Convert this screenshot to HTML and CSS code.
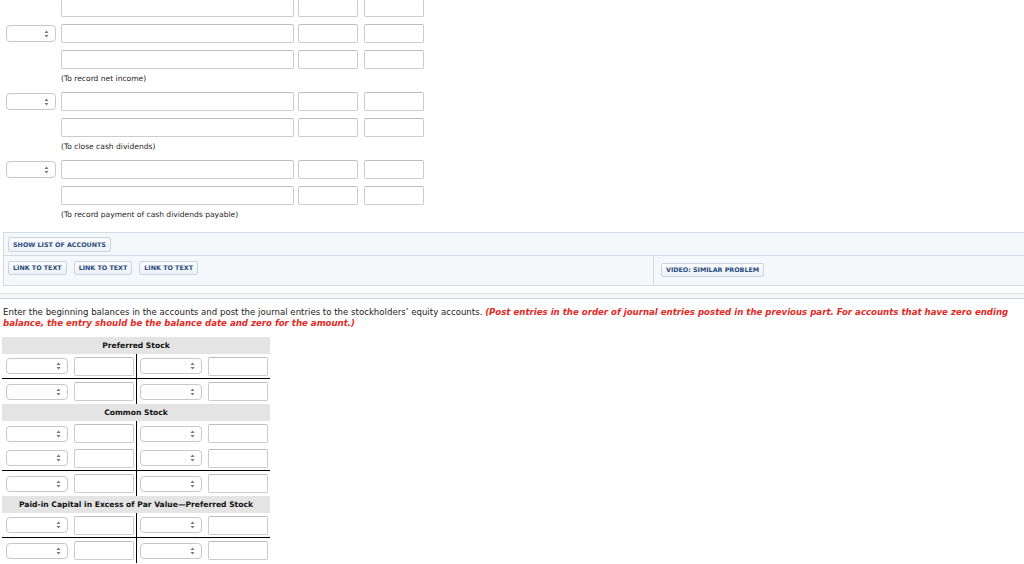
FILE: index.html
```html
<!DOCTYPE html>
<html lang="en">
<head>
  <meta charset="UTF-8" />
  <meta name="viewport" content="width=device-width, initial-scale=1.0"/>
  <title>Stockholders' Equity</title>
  <link rel="stylesheet" href="styles.css">
</head>
<body>

  <div class="journal">
    <div class="entry">
      <div class="jrow">
        <span class="date-slot"></span>
        <input class="acct" type="text"><input class="amt" type="text"><input class="amt" type="text">
      </div>
      <div class="jrow">
        <span class="select date"><svg width="5" height="8" viewBox="0 0 5 8"><path d="M2.5 0.5 L4.5 3 L0.5 3 Z M2.5 7.5 L4.5 5 L0.5 5 Z" fill="#777"/></svg></span>
        <input class="acct" type="text"><input class="amt" type="text"><input class="amt" type="text">
      </div>
      <div class="jrow">
        <span class="date-slot"></span>
        <input class="acct" type="text"><input class="amt" type="text"><input class="amt" type="text">
      </div>
      <p class="note">(To record net income)</p>
    </div>

    <div class="entry">
      <div class="jrow">
        <span class="select date"><svg width="5" height="8" viewBox="0 0 5 8"><path d="M2.5 0.5 L4.5 3 L0.5 3 Z M2.5 7.5 L4.5 5 L0.5 5 Z" fill="#777"/></svg></span>
        <input class="acct" type="text"><input class="amt" type="text"><input class="amt" type="text">
      </div>
      <div class="jrow">
        <span class="date-slot"></span>
        <input class="acct" type="text"><input class="amt" type="text"><input class="amt" type="text">
      </div>
      <p class="note">(To close cash dividends)</p>
    </div>

    <div class="entry">
      <div class="jrow">
        <span class="select date"><svg width="5" height="8" viewBox="0 0 5 8"><path d="M2.5 0.5 L4.5 3 L0.5 3 Z M2.5 7.5 L4.5 5 L0.5 5 Z" fill="#777"/></svg></span>
        <input class="acct" type="text"><input class="amt" type="text"><input class="amt" type="text">
      </div>
      <div class="jrow">
        <span class="date-slot"></span>
        <input class="acct" type="text"><input class="amt" type="text"><input class="amt" type="text">
      </div>
      <p class="note">(To record payment of cash dividends payable)</p>
    </div>
  </div>

  <div class="tools">
    <div class="tools-row">
      <button class="btn">SHOW LIST OF ACCOUNTS</button>
    </div>
    <div class="tools-row tools-row--links">
      <div class="links">
        <button class="btn">LINK TO TEXT</button>
        <button class="btn">LINK TO TEXT</button>
        <button class="btn">LINK TO TEXT</button>
      </div>
      <div class="video">
        <button class="btn">VIDEO: SIMILAR PROBLEM</button>
      </div>
    </div>
  </div>

  <div class="part-divider"></div>

  <p class="instructions">
    Enter the beginning balances in the accounts and post the journal entries to the stockholders’ equity accounts.
    <em class="hint">(Post entries in the order of journal entries posted in the previous part. For accounts that have zero ending balance, the entry should be the balance date and zero for the amount.)</em>
  </p>

  <div class="taccounts">
    <div class="taccount">
      <div class="t-title">Preferred Stock</div>
      <div class="t-row t-row--line">
        <div class="t-side"><span class="select"><svg width="5" height="8" viewBox="0 0 5 8"><path d="M2.5 0.5 L4.5 3 L0.5 3 Z M2.5 7.5 L4.5 5 L0.5 5 Z" fill="#777"/></svg></span><input class="amt" type="text"></div>
        <div class="t-side t-side--right"><span class="select"><svg width="5" height="8" viewBox="0 0 5 8"><path d="M2.5 0.5 L4.5 3 L0.5 3 Z M2.5 7.5 L4.5 5 L0.5 5 Z" fill="#777"/></svg></span><input class="amt" type="text"></div>
      </div>
      <div class="t-row">
        <div class="t-side"><span class="select"><svg width="5" height="8" viewBox="0 0 5 8"><path d="M2.5 0.5 L4.5 3 L0.5 3 Z M2.5 7.5 L4.5 5 L0.5 5 Z" fill="#777"/></svg></span><input class="amt" type="text"></div>
        <div class="t-side t-side--right"><span class="select"><svg width="5" height="8" viewBox="0 0 5 8"><path d="M2.5 0.5 L4.5 3 L0.5 3 Z M2.5 7.5 L4.5 5 L0.5 5 Z" fill="#777"/></svg></span><input class="amt" type="text"></div>
      </div>
    </div>

    <div class="taccount">
      <div class="t-title">Common Stock</div>
      <div class="t-row">
        <div class="t-side"><span class="select"><svg width="5" height="8" viewBox="0 0 5 8"><path d="M2.5 0.5 L4.5 3 L0.5 3 Z M2.5 7.5 L4.5 5 L0.5 5 Z" fill="#777"/></svg></span><input class="amt" type="text"></div>
        <div class="t-side t-side--right"><span class="select"><svg width="5" height="8" viewBox="0 0 5 8"><path d="M2.5 0.5 L4.5 3 L0.5 3 Z M2.5 7.5 L4.5 5 L0.5 5 Z" fill="#777"/></svg></span><input class="amt" type="text"></div>
      </div>
      <div class="t-row t-row--line">
        <div class="t-side"><span class="select"><svg width="5" height="8" viewBox="0 0 5 8"><path d="M2.5 0.5 L4.5 3 L0.5 3 Z M2.5 7.5 L4.5 5 L0.5 5 Z" fill="#777"/></svg></span><input class="amt" type="text"></div>
        <div class="t-side t-side--right"><span class="select"><svg width="5" height="8" viewBox="0 0 5 8"><path d="M2.5 0.5 L4.5 3 L0.5 3 Z M2.5 7.5 L4.5 5 L0.5 5 Z" fill="#777"/></svg></span><input class="amt" type="text"></div>
      </div>
      <div class="t-row">
        <div class="t-side"><span class="select"><svg width="5" height="8" viewBox="0 0 5 8"><path d="M2.5 0.5 L4.5 3 L0.5 3 Z M2.5 7.5 L4.5 5 L0.5 5 Z" fill="#777"/></svg></span><input class="amt" type="text"></div>
        <div class="t-side t-side--right"><span class="select"><svg width="5" height="8" viewBox="0 0 5 8"><path d="M2.5 0.5 L4.5 3 L0.5 3 Z M2.5 7.5 L4.5 5 L0.5 5 Z" fill="#777"/></svg></span><input class="amt" type="text"></div>
      </div>
    </div>

    <div class="taccount">
      <div class="t-title">Paid-in Capital in Excess of Par Value—Preferred Stock</div>
      <div class="t-row t-row--line">
        <div class="t-side"><span class="select"><svg width="5" height="8" viewBox="0 0 5 8"><path d="M2.5 0.5 L4.5 3 L0.5 3 Z M2.5 7.5 L4.5 5 L0.5 5 Z" fill="#777"/></svg></span><input class="amt" type="text"></div>
        <div class="t-side t-side--right"><span class="select"><svg width="5" height="8" viewBox="0 0 5 8"><path d="M2.5 0.5 L4.5 3 L0.5 3 Z M2.5 7.5 L4.5 5 L0.5 5 Z" fill="#777"/></svg></span><input class="amt" type="text"></div>
      </div>
      <div class="t-row">
        <div class="t-side"><span class="select"><svg width="5" height="8" viewBox="0 0 5 8"><path d="M2.5 0.5 L4.5 3 L0.5 3 Z M2.5 7.5 L4.5 5 L0.5 5 Z" fill="#777"/></svg></span><input class="amt" type="text"></div>
        <div class="t-side t-side--right"><span class="select"><svg width="5" height="8" viewBox="0 0 5 8"><path d="M2.5 0.5 L4.5 3 L0.5 3 Z M2.5 7.5 L4.5 5 L0.5 5 Z" fill="#777"/></svg></span><input class="amt" type="text"></div>
      </div>
    </div>
  </div>

</body>
</html>
```

FILE: styles.css
```css
body {
  font-family: "DejaVu Sans", Verdana, sans-serif;
  margin: 0;
  padding: 0;
  background: #fff;
  color: #222;
  overflow: hidden;
}

input {
  box-sizing: border-box;
  height: 19px;
  margin: 0;
  padding: 0 3px;
  border: 1px solid #cccccc;
  border-top-color: #bdbdbd;
  border-radius: 2px;
  background: #fff;
  font: inherit;
}

.journal {
  margin-top: -2px;
  padding-bottom: 4px;
}

.jrow {
  display: flex;
  align-items: center;
  gap: 4px;
  padding-left: 6px;
  margin-bottom: 7px;
}

.date-slot {
  width: 50px;
  margin-right: 1px;
}

.select {
  box-sizing: border-box;
  display: flex;
  justify-content: flex-end;
  align-items: center;
  height: 17px;
  padding-right: 6px;
  border: 1px solid #c8c8c8;
  border-radius: 4px;
  background: #fff;
}

.select.date {
  width: 50px;
  margin-right: 1px;
}

.acct {
  width: 233px;
}

.amt {
  width: 60px;
}

.jrow .amt + .amt {
  margin-left: 2px;
}

.note {
  margin: -2px 0 8px 61px;
  height: 10px;
  font-size: 7.55px;
  line-height: 10px;
}

.tools {
  margin-left: 3px;
  border: 1px solid #d5dbe3;
  border-right: none;
  background: #f5f8fb;
}

.tools-row {
  display: flex;
  align-items: flex-start;
  padding: 4px 4px 3px;
}

.tools-row + .tools-row {
  border-top: 1px solid #d5dbe3;
  padding: 0 0 0 4px;
  height: 29px;
}

.links {
  display: flex;
  align-items: flex-start;
  gap: 7px;
  width: 646px;
  height: 29px;
  box-sizing: border-box;
  padding-top: 5px;
  border-right: 1px solid #d5dbe3;
}

.video {
  display: flex;
  align-items: flex-start;
  padding: 7px 0 0 7px;
}

.btn {
  box-sizing: border-box;
  height: 15px;
  padding: 0 4px;
  border: 1px solid #cdd4dc;
  border-radius: 2px;
  background: linear-gradient(#fafbfd, #edf1f5);
  color: #2a4a7f;
  font-family: "DejaVu Sans", Verdana, sans-serif;
  font-size: 6.35px;
  font-weight: bold;
  line-height: 13px;
  cursor: pointer;
}

.links .btn,
.video .btn {
  height: 14px;
  line-height: 12px;
}

.part-divider {
  margin-top: 7px;
  height: 4px;
  border-top: 1px solid #dadfe6;
  border-bottom: 1px solid #cfd6df;
  background: #f5f8fb;
}

.instructions {
  margin: 8px 3px 0;
  font-size: 8.6px;
  line-height: 11px;
}

.hint {
  color: #e4291f;
  font-weight: bold;
}

.taccounts {
  margin: 8px 0 0 2px;
  width: 268px;
}

.t-title {
  height: 17px;
  background: #e4e4e4;
  text-align: center;
  font-size: 7.6px;
  font-weight: bold;
  line-height: 17px;
  color: #111;
}

.t-row {
  box-sizing: border-box;
  display: flex;
  height: 25px;
}

.t-row--line {
  border-bottom: 1px solid #000;
}

.t-side {
  display: flex;
  align-items: center;
  gap: 6px;
  width: 134px;
  padding-left: 4px;
  box-sizing: border-box;
}

.t-side--right {
  border-left: 1px solid #000;
  padding-left: 3px;
}

.t-side .select {
  width: 62px;
  height: 16px;
}
```
